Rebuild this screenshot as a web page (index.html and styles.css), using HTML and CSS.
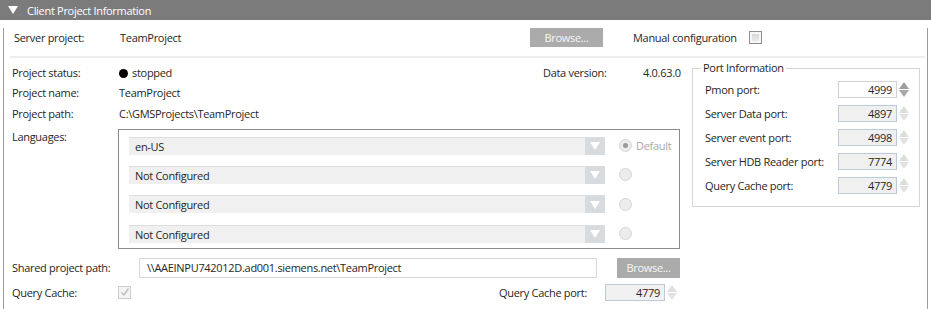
FILE: index.html
```html
<!DOCTYPE html>
<html lang="en">
<head>
  <meta charset="UTF-8">
  <title>Client Project Information</title>
  <link rel="stylesheet" href="styles.css">
</head>
<body>
  <div class="panel">
    <div class="panel-header"><span class="caret"></span>Client Project Information</div>
    <div class="panel-body">
      <div class="server-row">
        <span class="server-label">Server project:</span>
        <span class="server-value">TeamProject</span>
        <button class="btn btn-browse">Browse...</button>
        <span class="manual">Manual configuration</span>
        <span class="checkbox"></span>
      </div>
      <div class="separator"></div>

      <div class="content">
        <div class="left">
          <div class="info-grid">
            <span>Project status:</span>
            <span><span class="dot"></span>stopped</span>
            <span>Data version:</span>
            <span>4.0.63.0</span>
            <span>Project name:</span>
            <span>TeamProject</span>
            <span></span><span></span>
            <span>Project path:</span>
            <span>C:\GMSProjects\TeamProject</span>
            <span></span><span></span>
          </div>

          <div class="lang-row">
            <span class="label">Languages:</span>
            <div class="lang-box">
              <div class="lang-item">
                <div class="combo"><span>en-US</span><span class="combo-arrow"></span></div>
                <span class="radio checked"></span><span class="radio-text">Default</span>
              </div>
              <div class="lang-item">
                <div class="combo"><span>Not Configured</span><span class="combo-arrow"></span></div>
                <span class="radio"></span>
              </div>
              <div class="lang-item">
                <div class="combo"><span>Not Configured</span><span class="combo-arrow"></span></div>
                <span class="radio"></span>
              </div>
              <div class="lang-item">
                <div class="combo"><span>Not Configured</span><span class="combo-arrow"></span></div>
                <span class="radio"></span>
              </div>
            </div>
          </div>

          <div class="shared-row">
            <span class="shared-label">Shared project path:</span>
            <div class="text-input">\\AAEINPU742012D.ad001.siemens.net\TeamProject</div>
            <button class="btn btn-small">Browse...</button>
          </div>

          <div class="query-row">
            <span class="label">Query Cache:</span>
            <span class="checkbox disabled">
              <svg width="10" height="10" viewBox="0 0 10 10"><path d="M1.5 5.5 L4 8 L8.5 1.5" fill="none" stroke="#c2c2c2" stroke-width="1.6"/></svg>
            </span>
            <span class="query-port-label">Query Cache port:</span>
            <div class="num-input disabled">4779</div>
            <span class="spinner disabled"><i class="up"></i><i class="down"></i></span>
          </div>
        </div>

        <fieldset class="ports">
          <legend>Port Information</legend>
          <div class="port-row">
            <span class="port-label">Pmon port:</span>
            <div class="num-input">4999</div>
            <span class="spinner"><i class="up"></i><i class="down"></i></span>
          </div>
          <div class="port-row">
            <span class="port-label">Server Data port:</span>
            <div class="num-input disabled">4897</div>
            <span class="spinner disabled"><i class="up"></i><i class="down"></i></span>
          </div>
          <div class="port-row">
            <span class="port-label">Server event port:</span>
            <div class="num-input disabled">4998</div>
            <span class="spinner disabled"><i class="up"></i><i class="down"></i></span>
          </div>
          <div class="port-row">
            <span class="port-label">Server HDB Reader port:</span>
            <div class="num-input disabled">7774</div>
            <span class="spinner disabled"><i class="up"></i><i class="down"></i></span>
          </div>
          <div class="port-row">
            <span class="port-label">Query Cache port:</span>
            <div class="num-input disabled">4779</div>
            <span class="spinner disabled"><i class="up"></i><i class="down"></i></span>
          </div>
        </fieldset>
      </div>
    </div>
  </div>
</body>
</html>
```

FILE: styles.css
```css
:root {
  --header-bg: #7b7b7b;
  --panel-border: #9c9c9c;
  --text-color: #262626;
  --muted: #a8a8a8;
  --field-bg: #f0f0f0;
  --field-border: #bccad8;
  --button-bg: #ababab;
}

* {
  box-sizing: border-box;
}

body {
  margin: 0;
  font-family: "Open Sans", "Noto Sans", sans-serif;
  font-size: 11px;
  letter-spacing: -0.3px;
  color: var(--text-color);
  background: #fff;
}

.panel {
  width: 931px;
}

.panel-header {
  height: 20px;
  background: var(--header-bg);
  color: #fff;
  display: flex;
  align-items: center;
  padding-left: 8px;
}

.caret {
  width: 0;
  height: 0;
  border-left: 5px solid transparent;
  border-right: 5px solid transparent;
  border-top: 8px solid #fff;
  margin-right: 9px;
}

.panel-body {
  margin: 0 3px;
  height: 288px;
  border: 1px solid var(--panel-border);
  border-top: none;
}

/* Server project row */
.server-row {
  display: flex;
  align-items: center;
  height: 19px;
  margin-top: 8px;
  padding-left: 10px;
}

.server-label {
  width: 106px;
}

.server-value {
  width: 410px;
}

.btn {
  font-family: inherit;
  font-size: 11px;
  letter-spacing: inherit;
  border: none;
  background: var(--button-bg);
  color: #f6f6f6;
  padding: 0;
}

.btn-browse {
  width: 73px;
  height: 19px;
}

.manual {
  margin-left: 30px;
}

.checkbox {
  width: 13px;
  height: 13px;
  margin-left: 12px;
  border: 1px solid #8e8e8e;
  box-shadow: inset 0 0 0 2px #f6f6f6;
  background: linear-gradient(#d4d4d4, #eeeeee);
  display: flex;
  align-items: center;
  justify-content: center;
}

.checkbox.disabled {
  margin-left: 0;
  border-color: #cdcdcd;
  box-shadow: none;
  background: #f4f4f4;
}

.separator {
  height: 2px;
  background: #eeeeee;
  margin: 9px 2px 0 6px;
}

/* Main content */
.content {
  display: flex;
  align-items: flex-start;
  margin-top: 4px;
  padding-left: 8px;
}

.left {
  width: 668px;
}

.info-grid {
  display: grid;
  grid-template-columns: 107px 424px 100px auto;
  grid-auto-rows: 20.5px;
  align-items: center;
}

.dot {
  display: inline-block;
  width: 9px;
  height: 9px;
  border-radius: 50%;
  background: #000;
  margin-right: 4px;
  vertical-align: -1px;
}

.label {
  width: 106px;
  flex-shrink: 0;
}

.lang-row {
  display: flex;
  margin-top: 5px;
}

.lang-row .label {
  line-height: 16px;
}

.lang-box {
  width: 562px;
  border: 1px solid #8c8c8c;
  padding: 7px 0 5px 10px;
  display: flex;
  flex-direction: column;
  gap: 11.4px;
}

.lang-item {
  display: flex;
  align-items: center;
  height: 18px;
}

.combo {
  width: 476px;
  height: 18px;
  display: flex;
  align-items: center;
  justify-content: space-between;
  background: var(--field-bg);
  border-top: 1px solid #dddddd;
  padding-left: 6px;
}

.combo-arrow {
  width: 20px;
  height: 100%;
  background: #d6dbe0;
  display: flex;
  align-items: center;
  justify-content: center;
}

.combo-arrow::after {
  content: "";
  border-left: 5px solid transparent;
  border-right: 5px solid transparent;
  border-top: 8px solid #fff;
}

.radio {
  width: 13px;
  height: 13px;
  border-radius: 50%;
  border: 1px solid #d6d6d6;
  background: #ececec;
  margin-left: 14px;
  display: flex;
  align-items: center;
  justify-content: center;
}

.radio.checked::after {
  content: "";
  width: 5px;
  height: 5px;
  border-radius: 50%;
  background: #9a9a9a;
}

.radio-text {
  margin-left: 4px;
  color: var(--muted);
}

.shared-row {
  display: flex;
  align-items: center;
  margin-top: 9px;
}

.shared-label {
  width: 127px;
}

.text-input {
  width: 458px;
  height: 20px;
  border: 1px solid #d8d8d8;
  padding-left: 7px;
  display: flex;
  align-items: center;
}

.btn-small {
  width: 63px;
  height: 20px;
  margin-left: 20px;
}

.query-row {
  display: flex;
  align-items: center;
  margin-top: 6px;
  padding-right: 3px;
}

.query-port-label {
  margin-left: auto;
  margin-right: 18px;
}

/* Numeric inputs with spinners */
.num-input {
  width: 60px;
  height: 17px;
  border: 1px solid #d2d2d2;
  background: #fff;
  text-align: right;
  padding-right: 4px;
  line-height: 15px;
}

.num-input.disabled {
  background: var(--field-bg);
  border-color: var(--field-border);
}

.spinner {
  display: flex;
  flex-direction: column;
  gap: 1px;
  margin-left: 2px;
}

.spinner i {
  width: 0;
  height: 0;
  border-left: 5px solid transparent;
  border-right: 5px solid transparent;
}

.spinner .up {
  border-bottom: 7px solid #9d9d9d;
}

.spinner .down {
  border-top: 7px solid #a8a8a8;
}

.spinner.disabled .up {
  border-bottom-color: #dedede;
}

.spinner.disabled .down {
  border-top-color: #e2e2e2;
}

/* Port information group */
.ports {
  width: 228px;
  margin: -1px 0 0 12px;
  padding: 2px 8px 9px 8px;
  border: 1px solid #d5d5d5;
}

.ports legend {
  padding: 0 2px;
  line-height: 14px;
}

.port-row {
  display: flex;
  align-items: center;
  height: 24px;
  padding-left: 4px;
}

.port-label {
  width: 133px;
}

.ports .num-input {
  width: 59px;
}
```
